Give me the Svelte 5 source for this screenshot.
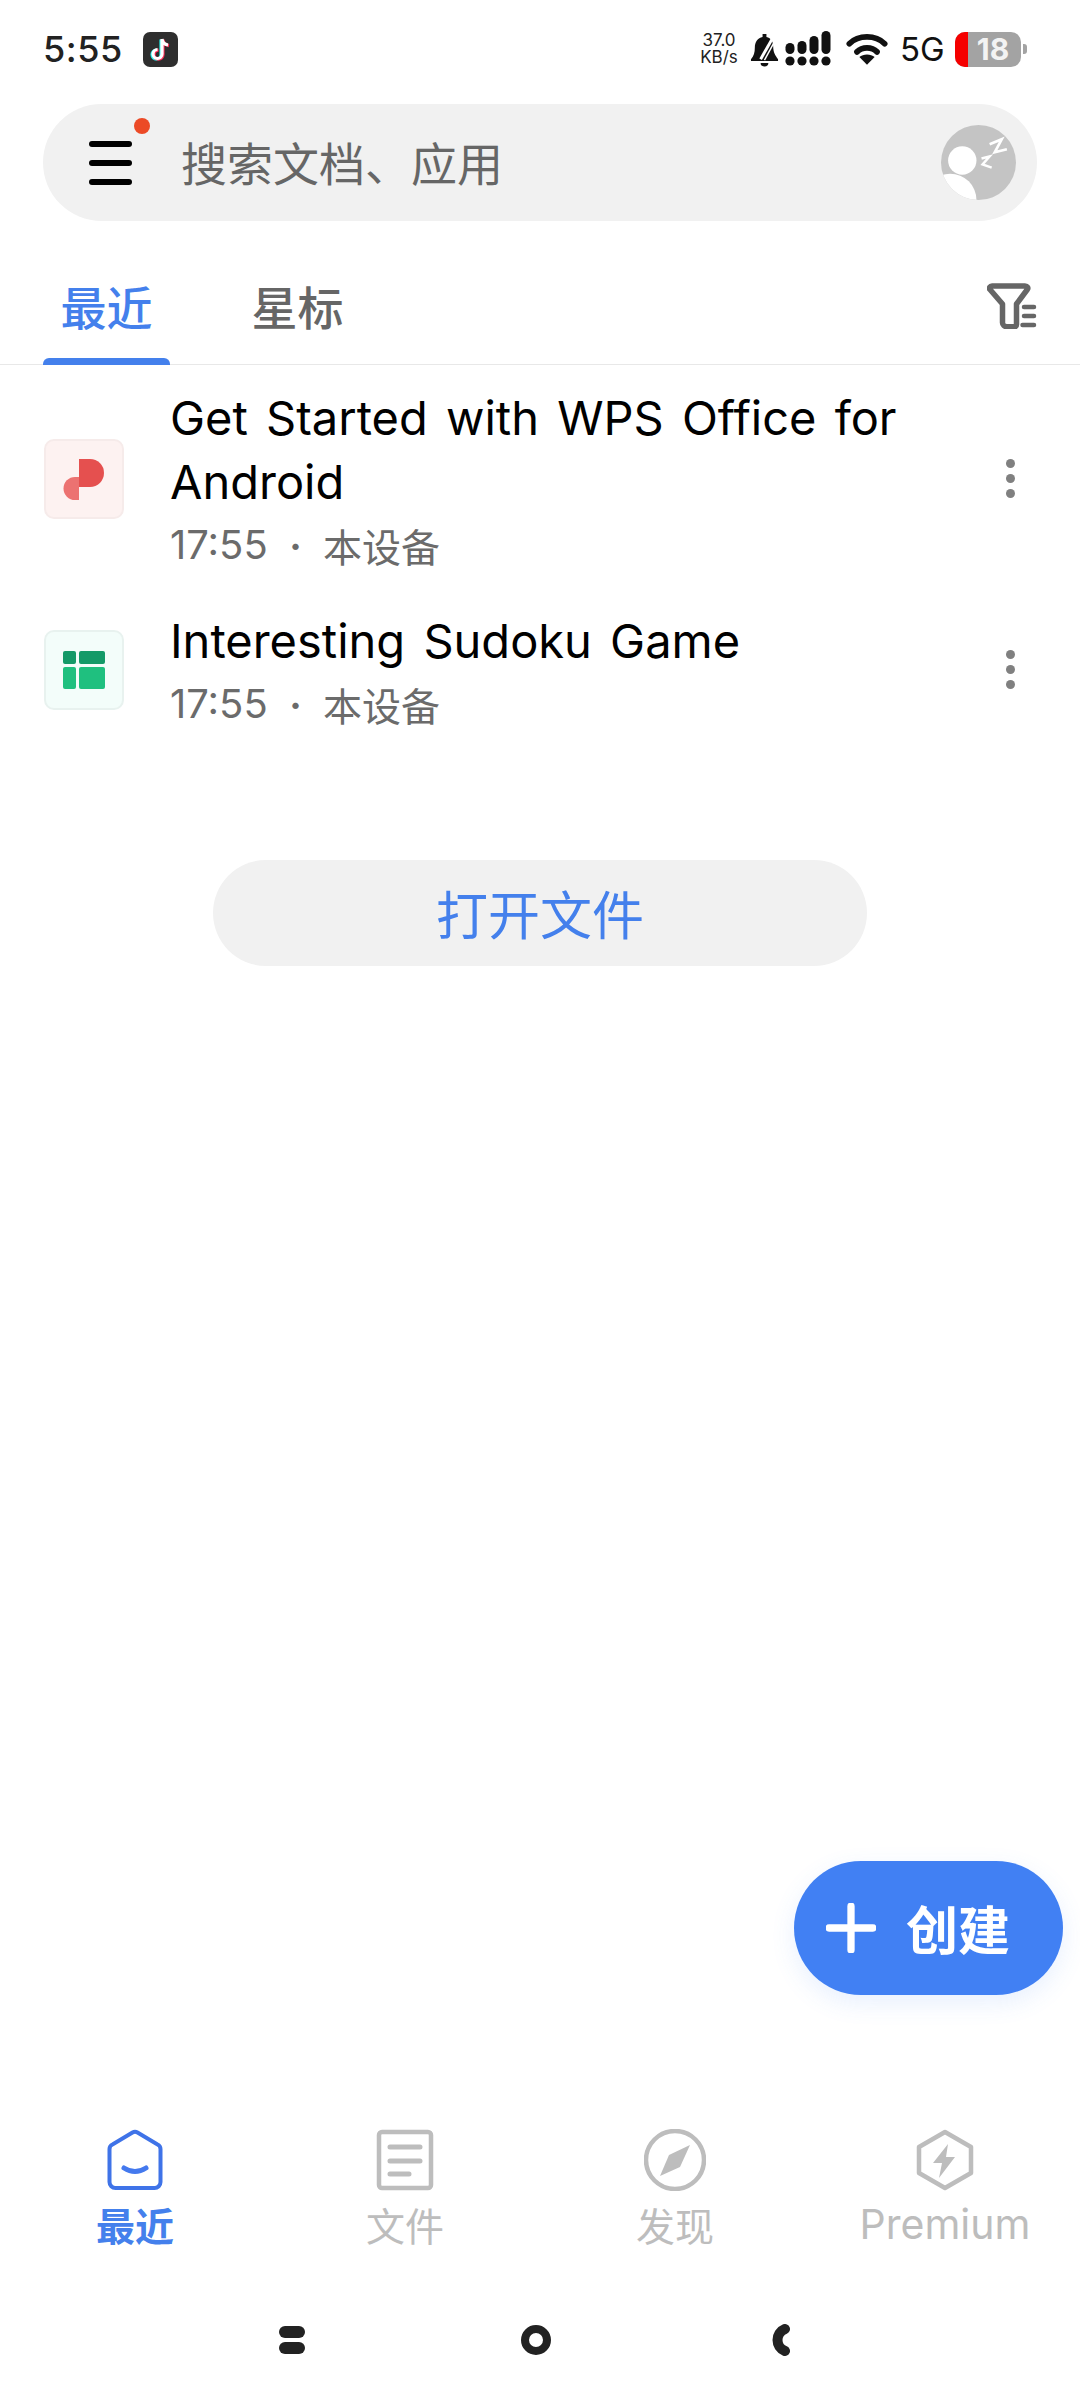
<script>
  const rows = [
    { id: 'p', lines: 'Get Started with WPS Office for Android', meta: '本设备' },
    { id: 's', lines: 'Interesting Sudoku Game', meta: '本设备' }
  ];
  const nav = [
    { id: 'home', label: '最近', active: true },
    { id: 'file', label: '文件' },
    { id: 'find', label: '发现' },
    { id: 'prem', label: 'Premium', latin: true }
  ];
</script>

<div class="page">
  <header class="status">
    <div class="status-left">
      <span class="time">5:55</span>
      <svg class="tiktok" viewBox="0 0 35 35">
        <rect width="35" height="35" rx="7" fill="#2e2e2e"/>
        <path d="M19 7v15a4.500 4.500 0 1 1-4.500-4.500" fill="none" stroke="#25f4ee" stroke-width="3.200" transform="translate(-1 .6)"/>
        <path d="M19 7v15a4.500 4.500 0 1 1-4.500-4.500M19 7c.4 3.500 2.600 5.500 6 6" fill="none" stroke="#fe2c55" stroke-width="3.200" transform="translate(1 .6)"/>
        <path d="M19 7v15a4.500 4.500 0 1 1-4.500-4.500M19 7c.4 3.500 2.600 5.500 6 6" fill="none" stroke="#fff" stroke-width="3.200"/>
      </svg>
    </div>
    <div class="status-right">
      <span class="speed"><span>37.0</span><span>KB/s</span></span>
      <svg class="bell" viewBox="0 0 30 36">
        <path d="M13 2h4v3c5 1 7 5 7 10 0 6 2 9 5 13v2H1v-2c3-3 4-7 4-12 0-6 3-10 8-11z" fill="#111"/>
        <path d="M11 32h8a4 3.500 0 0 1-8 0z" fill="#111"/>
        <path d="M27 0L11 28" stroke="#fff" stroke-width="3"/>
        <path d="M28 5L15 29" stroke="#fff" stroke-width="1.500"/>
      </svg>
      <svg class="signal" viewBox="0 0 46 36">
        <g fill="#111">
          <circle cx="5" cy="30" r="4.600"/><circle cx="17" cy="30" r="4.600"/><circle cx="29" cy="30" r="4.600"/><circle cx="41" cy="30" r="4.600"/>
          <rect x="0.500" y="12" width="9" height="11" rx="4.500"/>
          <rect x="12.500" y="10" width="9" height="13" rx="4.500"/>
          <rect x="24.500" y="5" width="9" height="18" rx="4.500"/>
          <rect x="36.500" y="0" width="9" height="23" rx="4.500"/>
        </g>
      </svg>
      <svg class="wifi" viewBox="0 0 44 33">
        <g fill="none" stroke="#111" stroke-width="6" stroke-linecap="round">
          <path d="M3.500 11C13 1.500 31 1.500 40.500 11"/>
          <path d="M11.500 19.500C17 14 27 14 32.500 19.500"/>
        </g>
        <path d="M22 33l-8-8c4-3.500 12-3.500 16 0z" fill="#111"/>
      </svg>
      <span class="net">5G</span>
      <div class="battery">
        <div class="battery-body"><span class="battery-low"></span><span class="battery-num">18</span></div>
        <span class="battery-nub"></span>
      </div>
    </div>
  </header>

  <div class="search">
    <div class="menu">
      <span></span><span></span><span></span>
      <i class="dot"></i>
    </div>
    <span class="search-text">搜索文档、应用</span>
    <svg class="avatar" viewBox="0 0 74 74">
      <defs><clipPath id="av"><circle cx="37" cy="37" r="37"/></clipPath></defs>
      <circle cx="37" cy="37" r="37" fill="#c4c4c4"/>
      <g clip-path="url(#av)" fill="#fff">
        <circle cx="21" cy="35" r="14"/>
        <circle cx="9" cy="74" r="26"/>
      </g>
      <g fill="none" stroke="#fff" stroke-width="2.600">
        <path d="M48 19L60 14 53 27 65 24"/>
        <path d="M40 33L48 31 41 39 50 42" stroke-width="2.400"/>
      </g>
    </svg>
  </div>

  <nav class="tabs">
    <div class="tab active">最近</div>
    <div class="tab">星标</div>
    <svg class="filter" viewBox="0 0 50 46">
      <path d="M5 3h33c2.500 0 3.500 2 2.300 3.500L29.500 21v20.500c0 1.500-1 2.300-2.500 2.300h-7c-2.500 0-4.500-2-4.500-4V21L3 6.500C1.700 5 3 3 5 3z" fill="none" stroke="#666" stroke-width="5.500" stroke-linejoin="round"/>
      <g stroke="#666" stroke-width="4.500" stroke-linecap="round">
        <path d="M37 24h10M37 33h10M35.500 42h11.500"/>
      </g>
    </svg>
  </nav>

  <section class="list">
    {#each rows as r}
      <article class="row">
        {#if r.id === 'p'}
          <div class="thumb thumb-p">
            <svg viewBox="0 0 44 44" class="glyph">
              <path d="M17 2h11a14 14 0 0 1 0 28H17z" fill="#e5504f"/>
              <path d="M15 21v23H11a11.500 11.500 0 0 1 0-23z" fill="#ec7271" transform="translate(2 -1)"/>
            </svg>
          </div>
        {:else}
          <div class="thumb thumb-s">
            <svg viewBox="0 0 44 44" class="glyph">
              <rect x="1" y="3" width="13" height="13" rx="2" fill="#149a68"/>
              <rect x="17" y="3" width="26" height="13" rx="2" fill="#149a68"/>
              <rect x="1" y="19" width="13" height="22" rx="2" fill="#1fc07f"/>
              <rect x="17" y="19" width="26" height="22" rx="2" fill="#1fc07f"/>
            </svg>
          </div>
        {/if}
        <div class="row-text">
          <div class="title">{r.lines}</div>
          <div class="meta"><span>17:55</span><span class="sep">·</span><span>{r.meta}</span></div>
        </div>
        <div class="more"><span></span><span></span><span></span></div>
      </article>
    {/each}
  </section>

  <div class="open-wrap"><div class="open">打开文件</div></div>

  <div class="fab">
    <svg class="plus" viewBox="0 0 48 48"><path d="M24 3v42M3 24h42" stroke="#fff" stroke-width="7" stroke-linecap="round"/></svg>
    <span>创建</span>
  </div>

  <footer class="nav">
    {#each nav as n}
      <div class="nav-item" class:on={n.active}>
        {#if n.id === 'home'}
          <svg class="nav-icon" viewBox="0 0 62 62">
            <path d="M28.500 3.500a5 5 0 0 1 5 0l20 12a5 5 0 0 1 3 4.500v33a6 6 0 0 1-6 6h-39a6 6 0 0 1-6-6v-33a5 5 0 0 1 3-4.500z" fill="none" stroke="#3f73e8" stroke-width="4"/>
            <path d="M20 39c7 4.500 15 4.500 22 0" fill="none" stroke="#4479ee" stroke-width="5" stroke-linecap="round"/>
          </svg>
        {:else if n.id === 'file'}
          <svg class="nav-icon" viewBox="0 0 62 62">
            <rect x="5" y="3" width="52" height="56" rx="3" fill="none" stroke="#bdbdbd" stroke-width="4.500"/>
            <path d="M16 18h30M16 32h30M16 45h19" stroke="#bdbdbd" stroke-width="5" stroke-linecap="round"/>
          </svg>
        {:else if n.id === 'find'}
          <svg class="nav-icon" viewBox="0 0 62 62">
            <circle cx="31" cy="31" r="29" fill="none" stroke="#bdbdbd" stroke-width="4.500"/>
            <path d="M46 16L36 38 16 47l9-21z" fill="#bdbdbd"/>
          </svg>
        {:else}
          <svg class="nav-icon" viewBox="0 0 62 62">
            <path d="M31 3l26 15v26L31 59 5 44V18z" fill="none" stroke="#bdbdbd" stroke-width="4.500" stroke-linejoin="round"/>
            <path d="M34 15L19 34h9l-3 15 16-21h-9z" fill="#bdbdbd"/>
          </svg>
        {/if}
        <span class="nav-label" class:latin={n.latin}>{n.label}</span>
      </div>
    {/each}
  </footer>

  <div class="gesture">
    <svg viewBox="0 0 26 28" class="g g-a"><rect y="0" width="26" height="12" rx="6" fill="#222"/><rect y="16" width="26" height="12" rx="6" fill="#222"/></svg>
    <svg viewBox="0 0 30 30" class="g g-b"><circle cx="15" cy="15" r="11" fill="none" stroke="#222" stroke-width="8"/></svg>
    <svg viewBox="0 0 26 32" class="g g-c"><path d="M18 5C8 9 8 23 18 27" fill="none" stroke="#222" stroke-width="10" stroke-linecap="round"/></svg>
  </div>
</div>

<style>
  :global(body) { margin: 0; background: #fff; }
  .page {
    position: relative;
    width: 1080px;
    height: 2401px;
    overflow: hidden;
    display: flex;
    flex-direction: column;
    background: #fff;
    font-family: "Inter", "Noto Sans CJK SC", sans-serif;
  }
  .status {
    height: 98px;
    padding: 0 53px 0 43px;
    display: flex;
    justify-content: space-between;
    align-items: center;
    box-sizing: border-box;
  }
  .status-left { display: flex; align-items: center; gap: 20px; }
  .time { font: 500 36px/1 "Inter", sans-serif; color: #222; letter-spacing: .5px; }
  .tiktok { width: 35px; height: 35px; }
  .status-right { display: flex; align-items: center; }
  .speed {
    display: flex; flex-direction: column; align-items: center;
    font: 400 17px/17px "Inter", sans-serif; color: #222; width: 42px;
  }
  .bell { width: 29px; height: 35px; margin-left: 10px; }
  .signal { width: 46px; height: 36px; margin-left: 6px; }
  .wifi { width: 42px; height: 32px; margin-left: 15px; }
  .net { font: 400 33px/1 "Inter", sans-serif; color: #111; margin-left: 12px; width: 46px; }
  .battery { display: flex; align-items: center; margin-left: 9px; }
  .battery-body {
    position: relative; width: 66px; height: 35px; border-radius: 10px; overflow: hidden;
    background: #a3a3a3; display: flex; align-items: center; justify-content: center;
  }
  .battery-low { position: absolute; left: 0; top: 0; bottom: 0; width: 13px; background: #f50000; }
  .battery-num { position: relative; font: 700 30px/1 "Inter", sans-serif; color: #f3f3f3; margin-left: 10px; }
  .battery-nub { width: 4px; height: 10px; background: #a3a3a3; margin-left: 2px; border-radius: 0 3px 3px 0; }

  .search {
    margin: 6px 43px 0;
    height: 117px;
    border-radius: 59px;
    background: #f1f1f1;
    display: flex;
    align-items: center;
    padding: 0 21px 0 46px;
    box-sizing: border-box;
  }
  .menu { position: relative; width: 43px; display: flex; flex-direction: column; gap: 13px; margin-right: 49px; }
  .menu span { display: block; height: 6px; border-radius: 3px; background: #000; }
  .dot { position: absolute; width: 16px; height: 16px; border-radius: 50%; background: #ec4a26; right: -18px; top: -23px; }
  .search-text { flex: 1; font: 400 46px/1 "Noto Sans CJK SC", sans-serif; color: #666; padding-bottom: 4px; }
  .avatar { width: 75px; height: 75px; }

  .tabs {
    height: 144px;
    padding: 0 43px;
    box-sizing: border-box;
    display: flex;
    gap: 64px;
    position: relative;
    border-bottom: 1px solid #e8e8e8;
  }
  .tab {
    width: 127px;
    height: 144px;
    padding-top: 54px;
    box-sizing: border-box;
    text-align: center;
    font: 500 46px/60px "Noto Sans CJK SC", sans-serif;
    color: #666;
    position: relative;
  }
  .tab.active { color: #4480ec; }
  .tab.active::after {
    content: "";
    position: absolute;
    left: 0; right: 0; bottom: 0;
    height: 7px;
    border-radius: 6px 6px 0 0;
    background: #4480ec;
  }
  .filter { position: absolute; right: 43px; top: 62px; width: 50px; height: 46px; }

  .list { padding: 21px 0 0; display: flex; flex-direction: column; gap: 38px; }
  .row { display: flex; align-items: center; padding: 0 43px 0 44px; }
  .thumb {
    width: 80px; height: 80px; box-sizing: border-box; border-radius: 10px;
    display: flex; align-items: center; justify-content: center; flex: none;
    margin-right: 46px;
  }
  .glyph { width: 44px; height: 44px; }
  .thumb-p { background: #fdf2f1; border: 2px solid #f6ebea; }
  .thumb-s { background: #f3fdfa; border: 2px solid #e8f2ef; }
  .row-text { width: 770px; }
  .title { font: 400 47px/64px "Inter", "Noto Sans CJK SC", sans-serif; word-spacing: 5px; color: #000; }
  .meta {
    margin: 6px 0 1px;
    font: 400 39px/50px "Noto Sans CJK SC", sans-serif; color: #6b6b6b;
    display: flex;
  }
  .meta span:first-child { font-family: "Inter", sans-serif; font-size: 40px; width: 98px; }
  .sep { width: 55px; text-align: center; font-size: 30px; }
  .more { margin-left: auto; margin-right: 22px; display: flex; flex-direction: column; gap: 6px; }
  .more span { width: 9px; height: 9px; border-radius: 50%; background: #808080; }

  .open-wrap { margin-top: 130px; display: flex; justify-content: center; }
  .open {
    width: 654px; height: 106px; border-radius: 53px; background: #f1f1f1;
    display: flex; align-items: center; justify-content: center;
    font: 400 52px/1 "Noto Sans CJK SC", sans-serif; color: #4480ec;
  }

  .fab {
    position: absolute;
    right: 17px; bottom: 406px;
    width: 269px; height: 134px;
    border-radius: 67px;
    background: #4180f3;
    box-shadow: 0 8px 24px rgba(65, 128, 243, .12);
    display: flex; align-items: center;
    padding-left: 32px; box-sizing: border-box;
    font: 700 52px/1 "Noto Sans CJK SC", sans-serif; color: #fff;
  }
  .plus { width: 50px; height: 50px; margin-right: 30px; }

  .nav { margin-top: auto; display: grid; grid-template-columns: repeat(4, 1fr); height: 150px; }
  .nav-item { display: flex; flex-direction: column; align-items: center; color: #bdbdbd; }
  .nav-icon { width: 62px; height: 62px; margin-top: 9px; }
  .nav-label { margin-top: 8px; font: 400 39px/50px "Noto Sans CJK SC", sans-serif; }
  .nav-label.latin { font-family: "Inter", sans-serif; font-size: 41px; }
  .nav-item.on { color: #4480ec; }
  .nav-item.on .nav-label { font-weight: 700; }

  .gesture {
    height: 131px;
    padding: 8px 8px 0 0;
    box-sizing: border-box;
    display: flex; justify-content: center; align-items: center; gap: 216px;
  }
  .g { display: block; }
  .g-a { width: 26px; height: 28px; }
  .g-b { width: 30px; height: 30px; }
  .g-c { width: 26px; height: 32px; }
</style>
